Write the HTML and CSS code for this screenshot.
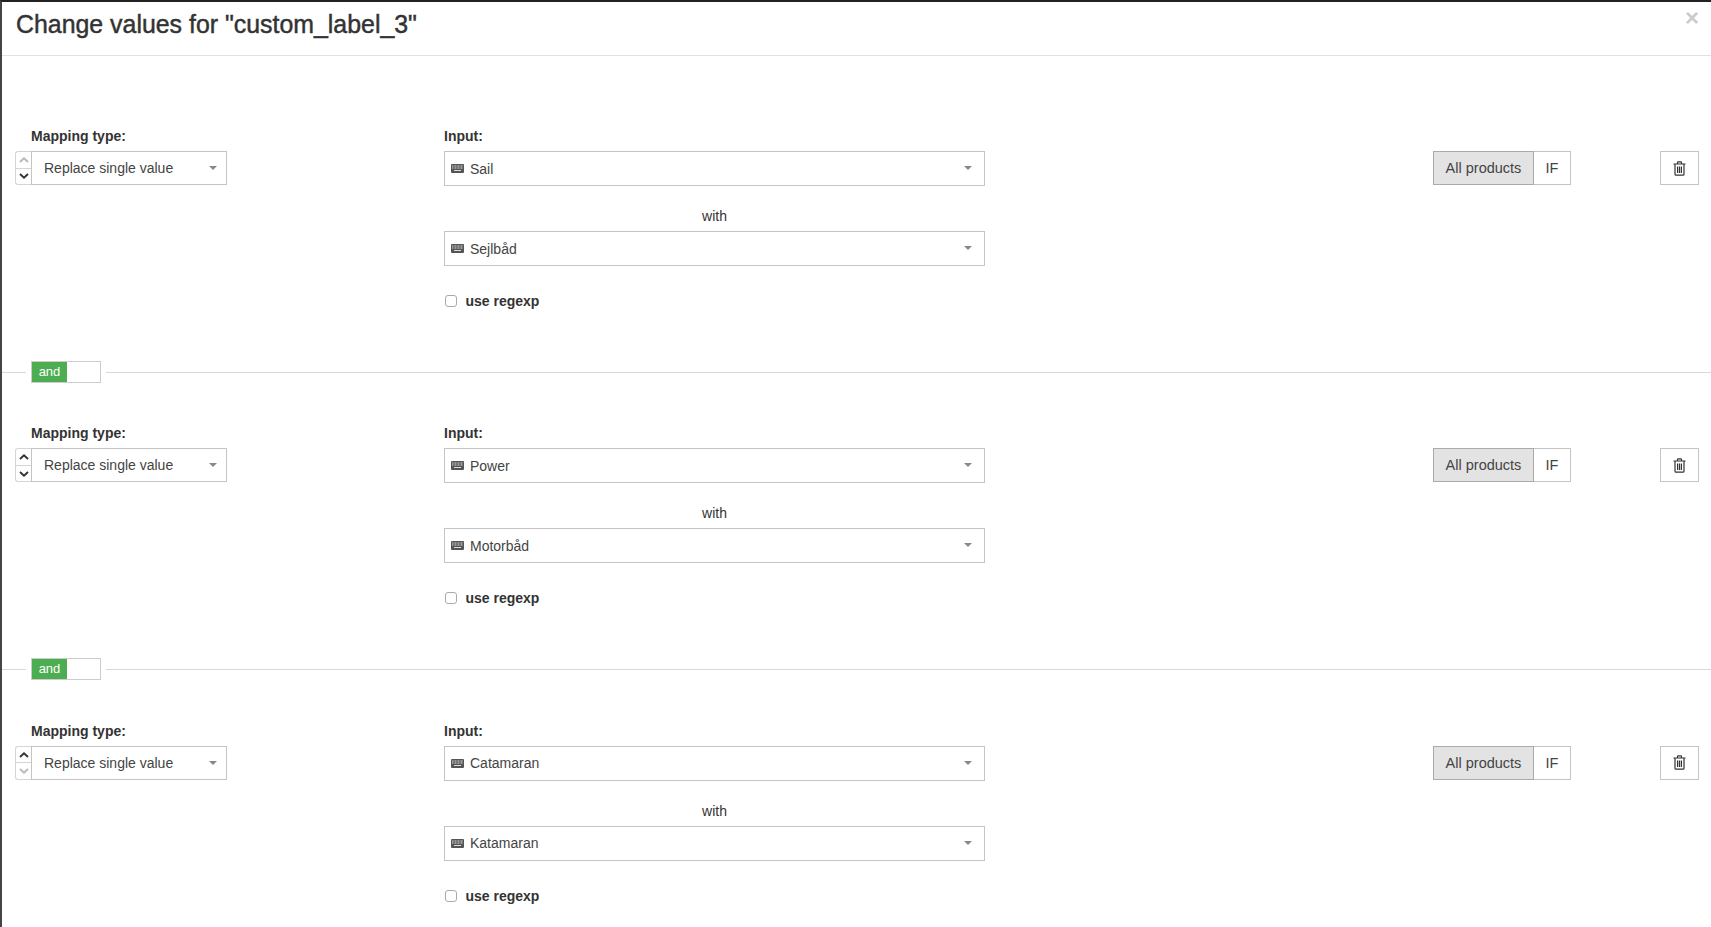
FILE: index.html
```html
<!DOCTYPE html>
<html lang="en">
<head>
<meta charset="utf-8">
<title>Change values</title>
<link rel="stylesheet" href="styles.css">
</head>
<body>
<svg class="defs" width="0" height="0" aria-hidden="true">
  <symbol id="kb" viewBox="0 0 13 9">
    <rect x="0" y="0" width="13" height="9" rx="1" fill="#555"/>
    <path d="M1 2h11M1 4h11" stroke="#ddd" stroke-width="1" stroke-dasharray="1 .5"/>
    <path d="M3 6.5h7" stroke="#ddd" stroke-width="1"/>
  </symbol>
  <symbol id="trash" viewBox="0 0 13 15">
    <path d="M0.5 3h12M4.5 3V1.6c0-.5.3-.8.8-.8h2.4c.5 0 .8.3.8.8V3M2 3v10.2c0 .6.4 1 1 1h7c.6 0 1-.4 1-1V3" fill="none" stroke="#333" stroke-width="1.2"/>
    <path d="M4.6 5.5v6.5M6.5 5.5v6.5M8.4 5.5v6.5" stroke="#333" stroke-width="1.2"/>
  </symbol>
  <symbol id="chev-up" viewBox="0 0 10 6"><path d="M1 5l4-3.6L9 5" fill="none" stroke="currentColor" stroke-width="1.9"/></symbol>
  <symbol id="chev-down" viewBox="0 0 10 6"><path d="M1 1l4 3.6L9 1" fill="none" stroke="currentColor" stroke-width="1.9"/></symbol>
</svg>
<div class="modal">
  <header class="modal-head">
    <h3 class="title">Change values for "custom_label_3"</h3>
    <span class="close">×</span>
  </header>
  <main class="modal-body">

    <section class="rule">
      <div class="col-type">
        <div class="label">Mapping type:</div>
        <div class="type-group">
          <div class="spinner">
            <span class="spin is-off"><svg class="chev"><use href="#chev-up"/></svg></span>
            <span class="spin"><svg class="chev"><use href="#chev-down"/></svg></span>
          </div>
          <div class="select type-select"><span class="val">Replace single value</span><i class="caret"></i></div>
        </div>
      </div>
      <div class="col-input">
        <div class="label">Input:</div>
        <div class="select"><svg class="kb"><use href="#kb"/></svg><span class="val">Sail</span><i class="caret"></i></div>
        <div class="with">with</div>
        <div class="select"><svg class="kb"><use href="#kb"/></svg><span class="val">Sejlbåd</span><i class="caret"></i></div>
        <label class="regexp"><input type="checkbox" class="check">use regexp</label>
      </div>
      <div class="col-actions">
        <div class="toggle"><span class="seg active">All products</span><span class="seg">IF</span></div>
        <button class="trash-btn" type="button"><svg class="trash"><use href="#trash"/></svg></button>
      </div>
    </section>

    <div class="divider"><span class="andor"><span class="and">and</span><span class="or"></span></span></div>

    <section class="rule">
      <div class="col-type">
        <div class="label">Mapping type:</div>
        <div class="type-group">
          <div class="spinner">
            <span class="spin"><svg class="chev"><use href="#chev-up"/></svg></span>
            <span class="spin"><svg class="chev"><use href="#chev-down"/></svg></span>
          </div>
          <div class="select type-select"><span class="val">Replace single value</span><i class="caret"></i></div>
        </div>
      </div>
      <div class="col-input">
        <div class="label">Input:</div>
        <div class="select"><svg class="kb"><use href="#kb"/></svg><span class="val">Power</span><i class="caret"></i></div>
        <div class="with">with</div>
        <div class="select"><svg class="kb"><use href="#kb"/></svg><span class="val">Motorbåd</span><i class="caret"></i></div>
        <label class="regexp"><input type="checkbox" class="check">use regexp</label>
      </div>
      <div class="col-actions">
        <div class="toggle"><span class="seg active">All products</span><span class="seg">IF</span></div>
        <button class="trash-btn" type="button"><svg class="trash"><use href="#trash"/></svg></button>
      </div>
    </section>

    <div class="divider"><span class="andor"><span class="and">and</span><span class="or"></span></span></div>

    <section class="rule">
      <div class="col-type">
        <div class="label">Mapping type:</div>
        <div class="type-group">
          <div class="spinner">
            <span class="spin"><svg class="chev"><use href="#chev-up"/></svg></span>
            <span class="spin is-off"><svg class="chev"><use href="#chev-down"/></svg></span>
          </div>
          <div class="select type-select"><span class="val">Replace single value</span><i class="caret"></i></div>
        </div>
      </div>
      <div class="col-input">
        <div class="label">Input:</div>
        <div class="select"><svg class="kb"><use href="#kb"/></svg><span class="val">Catamaran</span><i class="caret"></i></div>
        <div class="with">with</div>
        <div class="select"><svg class="kb"><use href="#kb"/></svg><span class="val">Katamaran</span><i class="caret"></i></div>
        <label class="regexp"><input type="checkbox" class="check">use regexp</label>
      </div>
      <div class="col-actions">
        <div class="toggle"><span class="seg active">All products</span><span class="seg">IF</span></div>
        <button class="trash-btn" type="button"><svg class="trash"><use href="#trash"/></svg></button>
      </div>
    </section>

  </main>
</div>
</body>
</html>
```
FILE: styles.css
```css
* { box-sizing: border-box; }
html, body { margin: 0; height: 100%; overflow: hidden; background: #fff; }
body { font-family: "Liberation Sans", Arial, sans-serif; font-size: 14px; color: #333; }
.defs { display: block; height: 0; }
.modal { height: 927px; border-top: 2px solid #222; border-left: 2px solid #444; background: #fff; overflow: hidden; }
.modal-head { height: 54px; border-bottom: 1px solid #e2e2e2; padding: 6px 12px 0 14px; display: flex; justify-content: space-between; align-items: flex-start; }
.title { margin: 0; font-size: 24.9px; font-weight: 400; -webkit-text-stroke: .45px #333; line-height: 33px; color: #333; }
.close { font-size: 24px; font-weight: 700; line-height: 20px; color: #000; opacity: .2; margin-top: 0; }
.modal-body { padding: 71px 12px 0 13px; }
.rule { display: flex; align-items: flex-start; height: 184px; }
.label { font-weight: 700; line-height: 18px; margin-bottom: 6px; }
.col-type { width: 429px; flex: none; }
.col-type .label { padding-left: 16px; }
.type-group { display: flex; width: 212px; height: 34px; }
.spinner { width: 16px; flex: none; display: flex; flex-direction: column; border: 1px solid #d5d5d5; border-right: 0; border-radius: 3px 0 0 3px; }
.spin { flex: 1; display: flex; align-items: center; justify-content: center; color: #333; }
.spin + .spin { border-top: 1px solid #d5d5d5; }
.spin.is-off { color: #b8b8b8; }
.chev { width: 10px; height: 6px; display: block; }
.select { position: relative; height: 34px; border: 1px solid #c4c4c4; display: flex; align-items: center; padding-left: 6px; background: #fff; }
.col-input .select { height: 35px; }
.type-select { flex: 1; padding-left: 12px; }
.type-select .caret { right: 9px; }
.val { color: #444; line-height: 20px; }
.kb { width: 13px; height: 9px; margin-right: 6px; flex: none; }
.caret { position: absolute; right: 12px; top: 14px; width: 0; height: 0; border-left: 4px solid transparent; border-right: 4px solid transparent; border-top: 4px solid #888; }
.col-input { width: 541px; flex: none; }
.with { height: 45px; padding-top: 15px; text-align: center; line-height: 31px; }
.regexp { display: flex; align-items: center; height: 20px; margin-top: 25px; font-weight: 700; }
.check { width: 12px; height: 12px; margin: 0 8.5px 0 1px; appearance: none; border: 1px solid #aaa; border-radius: 3px; background: #fff; }
.col-actions { flex: 1; display: flex; justify-content: space-between; padding: 24px 0 0 448px; }
.toggle { display: flex; height: 34px; font-size: 14.5px; }
.seg { display: flex; align-items: center; justify-content: center; width: 37px; border: 1px solid #c4c4c4; border-left: 0; color: #444; }
.seg.active { width: 101px; border: 1px solid #aaa; background: #e3e3e3; }
.trash-btn { width: 39px; height: 34px; padding: 0; border: 1px solid #c4c4c4; background: #fff; display: flex; align-items: center; justify-content: center; }
.trash { width: 13px; height: 15px; display: block; }
.divider { height: 22px; margin: 50px -12px 41.4px -13px; display: flex; align-items: center; padding-left: 29px; background: linear-gradient(#d8d8d8, #d8d8d8) center / 100% 1px no-repeat; }
.andor { display: flex; width: 70px; height: 22px; border: 1px solid #ccc; background: #fff; box-shadow: 0 0 0 5px #fff; }
.and { width: 35px; background: #4cae50; color: #fff; font-size: 13px; text-align: center; line-height: 20px; }
.or { flex: 1; }
```
